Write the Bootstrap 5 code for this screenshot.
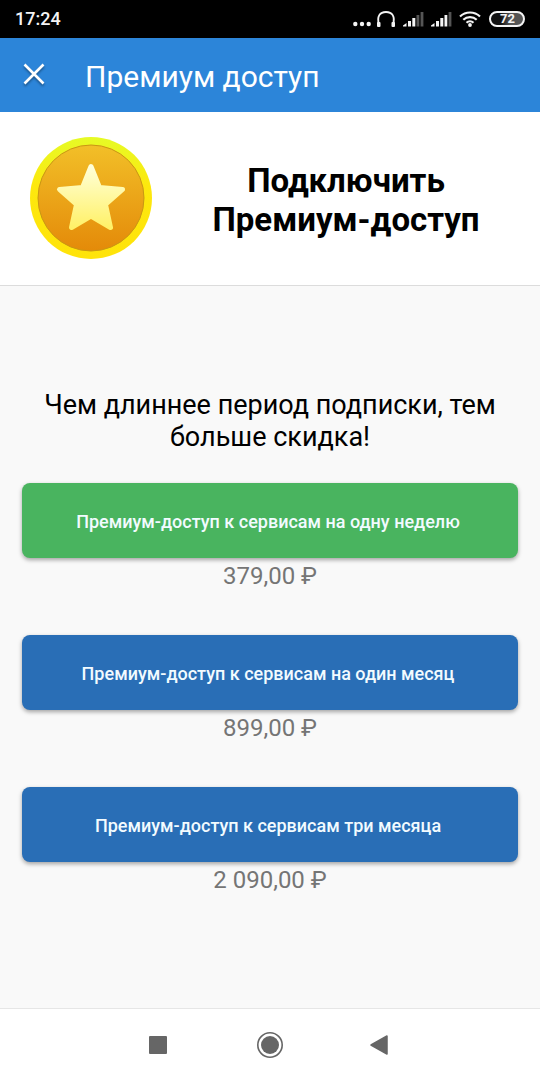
<!DOCTYPE html>
<html lang="ru">
<head>
<meta charset="utf-8">
<meta name="viewport" content="width=device-width, initial-scale=1">
<title>Премиум доступ</title>
<link href="https://cdn.jsdelivr.net/npm/bootstrap@5.3.0/dist/css/bootstrap.min.css" rel="stylesheet">
<style>
  body { font-family: Roboto, "Noto Sans", sans-serif; background: #f9f9f9; color: #000; }
  .status-bar { height: 38px; padding: 0 15px; background: #000; color: #f4f4f4; }
  .status-time { font-size: 18px; font-weight: 500; line-height: 24px; }
  .status-icons { gap: 7px; }
  .battery { width: 36px; height: 16px; border: 2px solid #f4f4f4; border-radius: 8px; font-size: 13px; line-height: 12px;
    font-weight: 700; padding-left: 9px; margin-left: 1px; background: linear-gradient(90deg, #111 30%, #555 60%); }
  .app-bar { height: 74px; padding: 0 20px; gap: 37px; background: #2c85d9; color: #fff; }
  .app-title { font-size: 30px; line-height: 36px; font-weight: 400; padding-top: 4px; }
  .close-btn { width: 28px; height: 32px; }
  .close-btn svg { filter: drop-shadow(0 2px 1px rgba(0, 0, 0, .35)); }
  .hero { padding: 25px 30px 26px; background: #fff; border-bottom: 1px solid #dcdcdc; }
  .hero-title { font-size: 33px; line-height: 39px; font-weight: 700; padding: 3px 0 0 30px; }
  .plans { padding: 103px 22px 0; }
  .promo { font-size: 27px; line-height: 32px; margin-bottom: 30px; }
  .plan { margin-bottom: 41px; }
  .plan-btn { --bs-btn-color: #f2fbff; --bs-btn-bg: #296eb6; --bs-btn-hover-color: #fff; --bs-btn-hover-bg: #245f9e;
    --bs-btn-active-color: #fff; --bs-btn-active-bg: #1f5189;
    height: 75px; border: 0; border-radius: 8px; font-size: 18px; line-height: 24px; font-weight: 500;
    padding: 8px 16px 6px 12px; box-shadow: 0 2px 4px rgba(0, 0, 0, .35); }
  .plan-btn-best { --bs-btn-bg: #49b45f; --bs-btn-hover-bg: #3f9f53; --bs-btn-active-bg: #378b48; }
  .price { font-size: 24px; line-height: 36px; color: #757575; }
  .system-nav { height: 72px; background: #fff; border-top: 1px solid #e6e6e6; }
  .system-nav .btn { width: 111px; border: 0; }
</style>
</head>
<body>
<div class="d-flex flex-column min-vh-100">
  <div class="status-bar d-flex align-items-center justify-content-between">
    <span class="status-time">17:24</span>
    <div class="status-icons d-flex align-items-center">
      <svg width="43" height="16" viewBox="0 0 43 16" aria-hidden="true">
        <g fill="#f4f4f4"><circle cx="2.300" cy="13" r="2.200"/><circle cx="9" cy="13" r="2.200"/><circle cx="15.700" cy="13" r="2.200"/>
          <rect x="24" y="11" width="3.500" height="5" rx="1"/><rect x="38.500" y="11" width="3.500" height="5" rx="1"/></g>
        <path d="M26 14C23.500 5 27 1 33 1s9.500 4 7 13" fill="none" stroke="#f4f4f4" stroke-width="1.900"/>
      </svg>
      <svg width="21" height="16" viewBox="0 0 21 16" aria-hidden="true">
        <g fill="#f4f4f4"><path d="M0 15.500V14.500l3.500-2.500v3.500z"/><rect x="5" y="10" width="3" height="5.500"/><rect x="9.300" y="7" width="3" height="8.500"/></g>
        <g fill="#555"><rect x="13.500" y="4" width="2.800" height="11.500"/><rect x="17.600" y="1" width="2.800" height="14.500"/></g>
      </svg>
      <svg width="21" height="16" viewBox="0 0 21 16" aria-hidden="true">
        <g fill="#f4f4f4"><path d="M0 15.500V14.500l3.500-2.500v3.500z"/><rect x="5" y="10" width="3" height="5.500"/><rect x="9.300" y="7" width="3" height="8.500"/><rect x="13.500" y="4" width="2.800" height="11.500"/></g>
        <rect x="17.600" y="1" width="2.800" height="14.500" fill="#555"/>
      </svg>
      <svg width="22" height="16" viewBox="0 0 22 16" aria-hidden="true">
        <g fill="none" stroke="#f4f4f4" stroke-width="2.200"><path d="M1 5.500a14.500 14.500 0 0 1 20 0M4.300 8.800a9.800 9.800 0 0 1 13.400 0M7.500 11.800a5.200 5.200 0 0 1 7 0"/></g>
        <circle cx="11" cy="14" r="1.900" fill="#f4f4f4"/>
      </svg>
      <span class="battery d-block">72</span>
    </div>
  </div>

  <header class="app-bar d-flex align-items-center">
    <button type="button" class="close-btn btn border-0 p-0 d-flex align-items-center justify-content-center" aria-label="Закрыть">
      <svg width="26" height="26" viewBox="0 0 26 26"><path d="M3.500 2.500l19 19M22.500 2.500l-19 19" stroke="#fff" stroke-width="2.600"/></svg>
    </button>
    <h1 class="app-title m-0">Премиум доступ</h1>
  </header>

  <section class="hero d-flex align-items-center">
    <svg class="flex-shrink-0" width="122" height="122" viewBox="0 0 122 122" aria-hidden="true">
      <defs>
        <linearGradient id="rim" x1="0" y1="0" x2="0" y2="1"><stop offset="0" stop-color="#e6fb26"/><stop offset=".4" stop-color="#fde80e"/><stop offset="1" stop-color="#ffe30a"/></linearGradient>
        <linearGradient id="disc" x1="0" y1="0" x2="0" y2="1"><stop offset="0" stop-color="#f2bf28"/><stop offset="1" stop-color="#e48a09"/></linearGradient>
        <linearGradient id="star" x1="0" y1="0" x2="0" y2="1"><stop offset="0" stop-color="#ffffd8"/><stop offset="1" stop-color="#fff168"/></linearGradient>
      </defs>
      <circle cx="61" cy="61" r="61" fill="url(#rim)"/>
      <circle cx="61" cy="61" r="53" fill="url(#disc)" stroke="#c99713" stroke-width="1"/>
      <path d="M61 29.500L69.500 50.500 92.500 52.500 75.500 67.500 80.500 90.500 61 79 41.500 90.500 46.500 67.500 29.500 52.500 52.500 50.500z" fill="url(#star)" stroke="url(#star)" stroke-width="5" stroke-linejoin="round"/>
    </svg>
    <h2 class="hero-title flex-grow-1 text-center m-0">Подключить<br>Премиум-доступ</h2>
  </section>

  <main class="plans flex-grow-1 text-center">
    <p class="promo">Чем длиннее период подписки, тем больше скидка!</p>
    <div class="plan">
      <button type="button" class="btn plan-btn plan-btn-best w-100">Премиум-доступ к сервисам на одну неделю</button>
      <div class="price">379,00 ₽</div>
    </div>
    <div class="plan">
      <button type="button" class="btn plan-btn w-100">Премиум-доступ к сервисам на один месяц</button>
      <div class="price">899,00 ₽</div>
    </div>
    <div class="plan">
      <button type="button" class="btn plan-btn w-100">Премиум-доступ к сервисам три месяца</button>
      <div class="price">2 090,00 ₽</div>
    </div>
  </main>

  <nav class="system-nav d-flex align-items-center justify-content-center" aria-label="Система">
    <button type="button" class="btn" aria-label="Недавние"><svg width="28" height="28" viewBox="0 0 28 28"><rect x="4" y="5" width="18" height="18" rx="1" fill="#666"/></svg></button>
    <button type="button" class="btn" aria-label="Домой"><svg width="28" height="28" viewBox="0 0 28 28"><circle cx="14" cy="14" r="12.200" fill="none" stroke="#666" stroke-width="1.600"/><circle cx="14" cy="14" r="9" fill="#666"/></svg></button>
    <button type="button" class="btn" aria-label="Назад"><svg width="28" height="28" viewBox="0 0 28 28"><path d="M4 14L20 5v18z" fill="#666" stroke="#666" stroke-width="1.500" stroke-linejoin="round"/></svg></button>
  </nav>
</div>
<script src="https://cdn.jsdelivr.net/npm/bootstrap@5.3.0/dist/js/bootstrap.bundle.min.js"></script>
</body>
</html>
